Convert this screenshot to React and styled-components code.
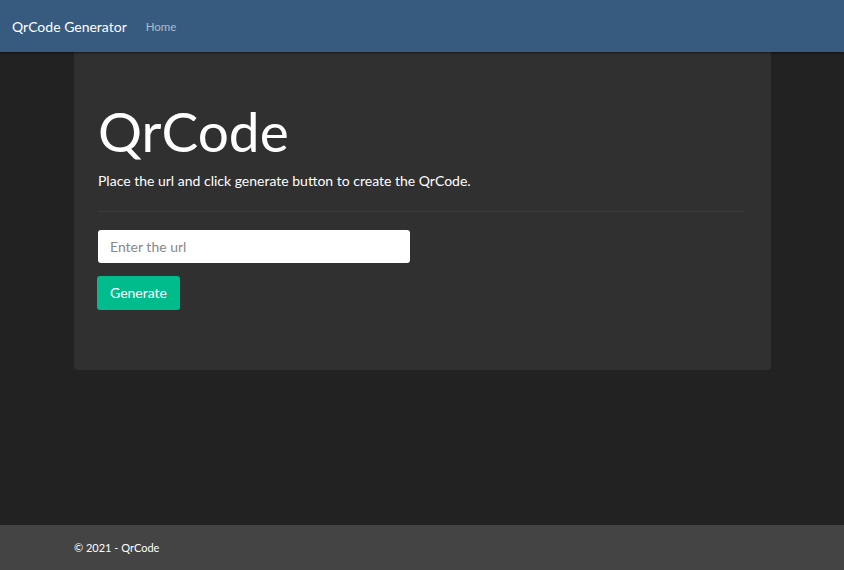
import React from "react";
import styled, { createGlobalStyle } from "styled-components";

const GlobalStyle = createGlobalStyle`
  html, body {
    margin: 0;
    padding: 0;
    background-color: #222222;
    font-family: Lato, "Open Sans", sans-serif;
    color: #ffffff;
  }
  * {
    box-sizing: border-box;
  }
`;

export const Page = styled.div`
  min-height: 570px;
  display: flex;
  flex-direction: column;
`;

export const NavBar = styled.nav`
  height: 52px;
  background-color: #375a7f;
  display: flex;
  align-items: center;
  padding: 0 12px;
  box-shadow: 0 1px 2px rgba(0, 0, 0, 0.5);
  position: relative;
  z-index: 1;
`;

export const Brand = styled.a`
  font-size: 14px;
  color: #ffffff;
  text-decoration: none;
  margin-right: 19px;
`;

export const NavLink = styled.a`
  font-size: 11.5px;
  color: rgba(255, 255, 255, 0.6);
  text-decoration: none;
`;

export const Main = styled.main`
  flex: 1;
  display: flex;
  justify-content: center;
`;

export const Jumbotron = styled.section`
  width: 697px;
  height: 318px;
  margin-left: 1px;
  background-color: #303030;
  border-radius: 0 0 4px 4px;
  padding: 46px 26px 0 24px;
`;

export const Heading = styled.h1`
  font-size: 55px;
  font-weight: 400;
  line-height: 1.2;
  margin: 0 0 7px 0;
`;

export const Lead = styled.p`
  font-size: 14px;
  margin: 0;
  line-height: 1.4;
`;

export const Divider = styled.hr`
  border: 0;
  border-top: 1px solid rgba(255, 255, 255, 0.06);
  margin: 20px 0 18px 0;
`;

export const UrlInput = styled.input`
  display: block;
  width: 312px;
  height: 33px;
  border: 0;
  border-radius: 3px;
  padding: 0 12px;
  font-family: Lato, "Open Sans", sans-serif;
  font-size: 14px;
  color: #444;
  margin-bottom: 13px;
  &::placeholder {
    color: #888;
  }
`;

export const Button = styled.button`
  height: 34px;
  padding: 0 13px;
  margin-left: -1px;
  border: 0;
  border-radius: 3px;
  background-color: #00bc8c;
  color: #ffffff;
  font-family: Lato, "Open Sans", sans-serif;
  font-size: 14px;
  cursor: pointer;
`;

export const Footer = styled.footer`
  height: 45px;
  background-color: #444444;
  display: flex;
  align-items: center;
  padding-left: 74px;
  font-size: 11px;
`;

export default function App() {
  return (
    <Page>
      <GlobalStyle />
      <NavBar>
        <Brand href="#">QrCode Generator</Brand>
        <NavLink href="#">Home</NavLink>
      </NavBar>
      <Main>
        <Jumbotron>
          <Heading>QrCode</Heading>
          <Lead>Place the url and click generate button to create the QrCode.</Lead>
          <Divider />
          <UrlInput placeholder="Enter the url" />
          <Button>Generate</Button>
        </Jumbotron>
      </Main>
      <Footer>© 2021 - QrCode</Footer>
    </Page>
  );
}
